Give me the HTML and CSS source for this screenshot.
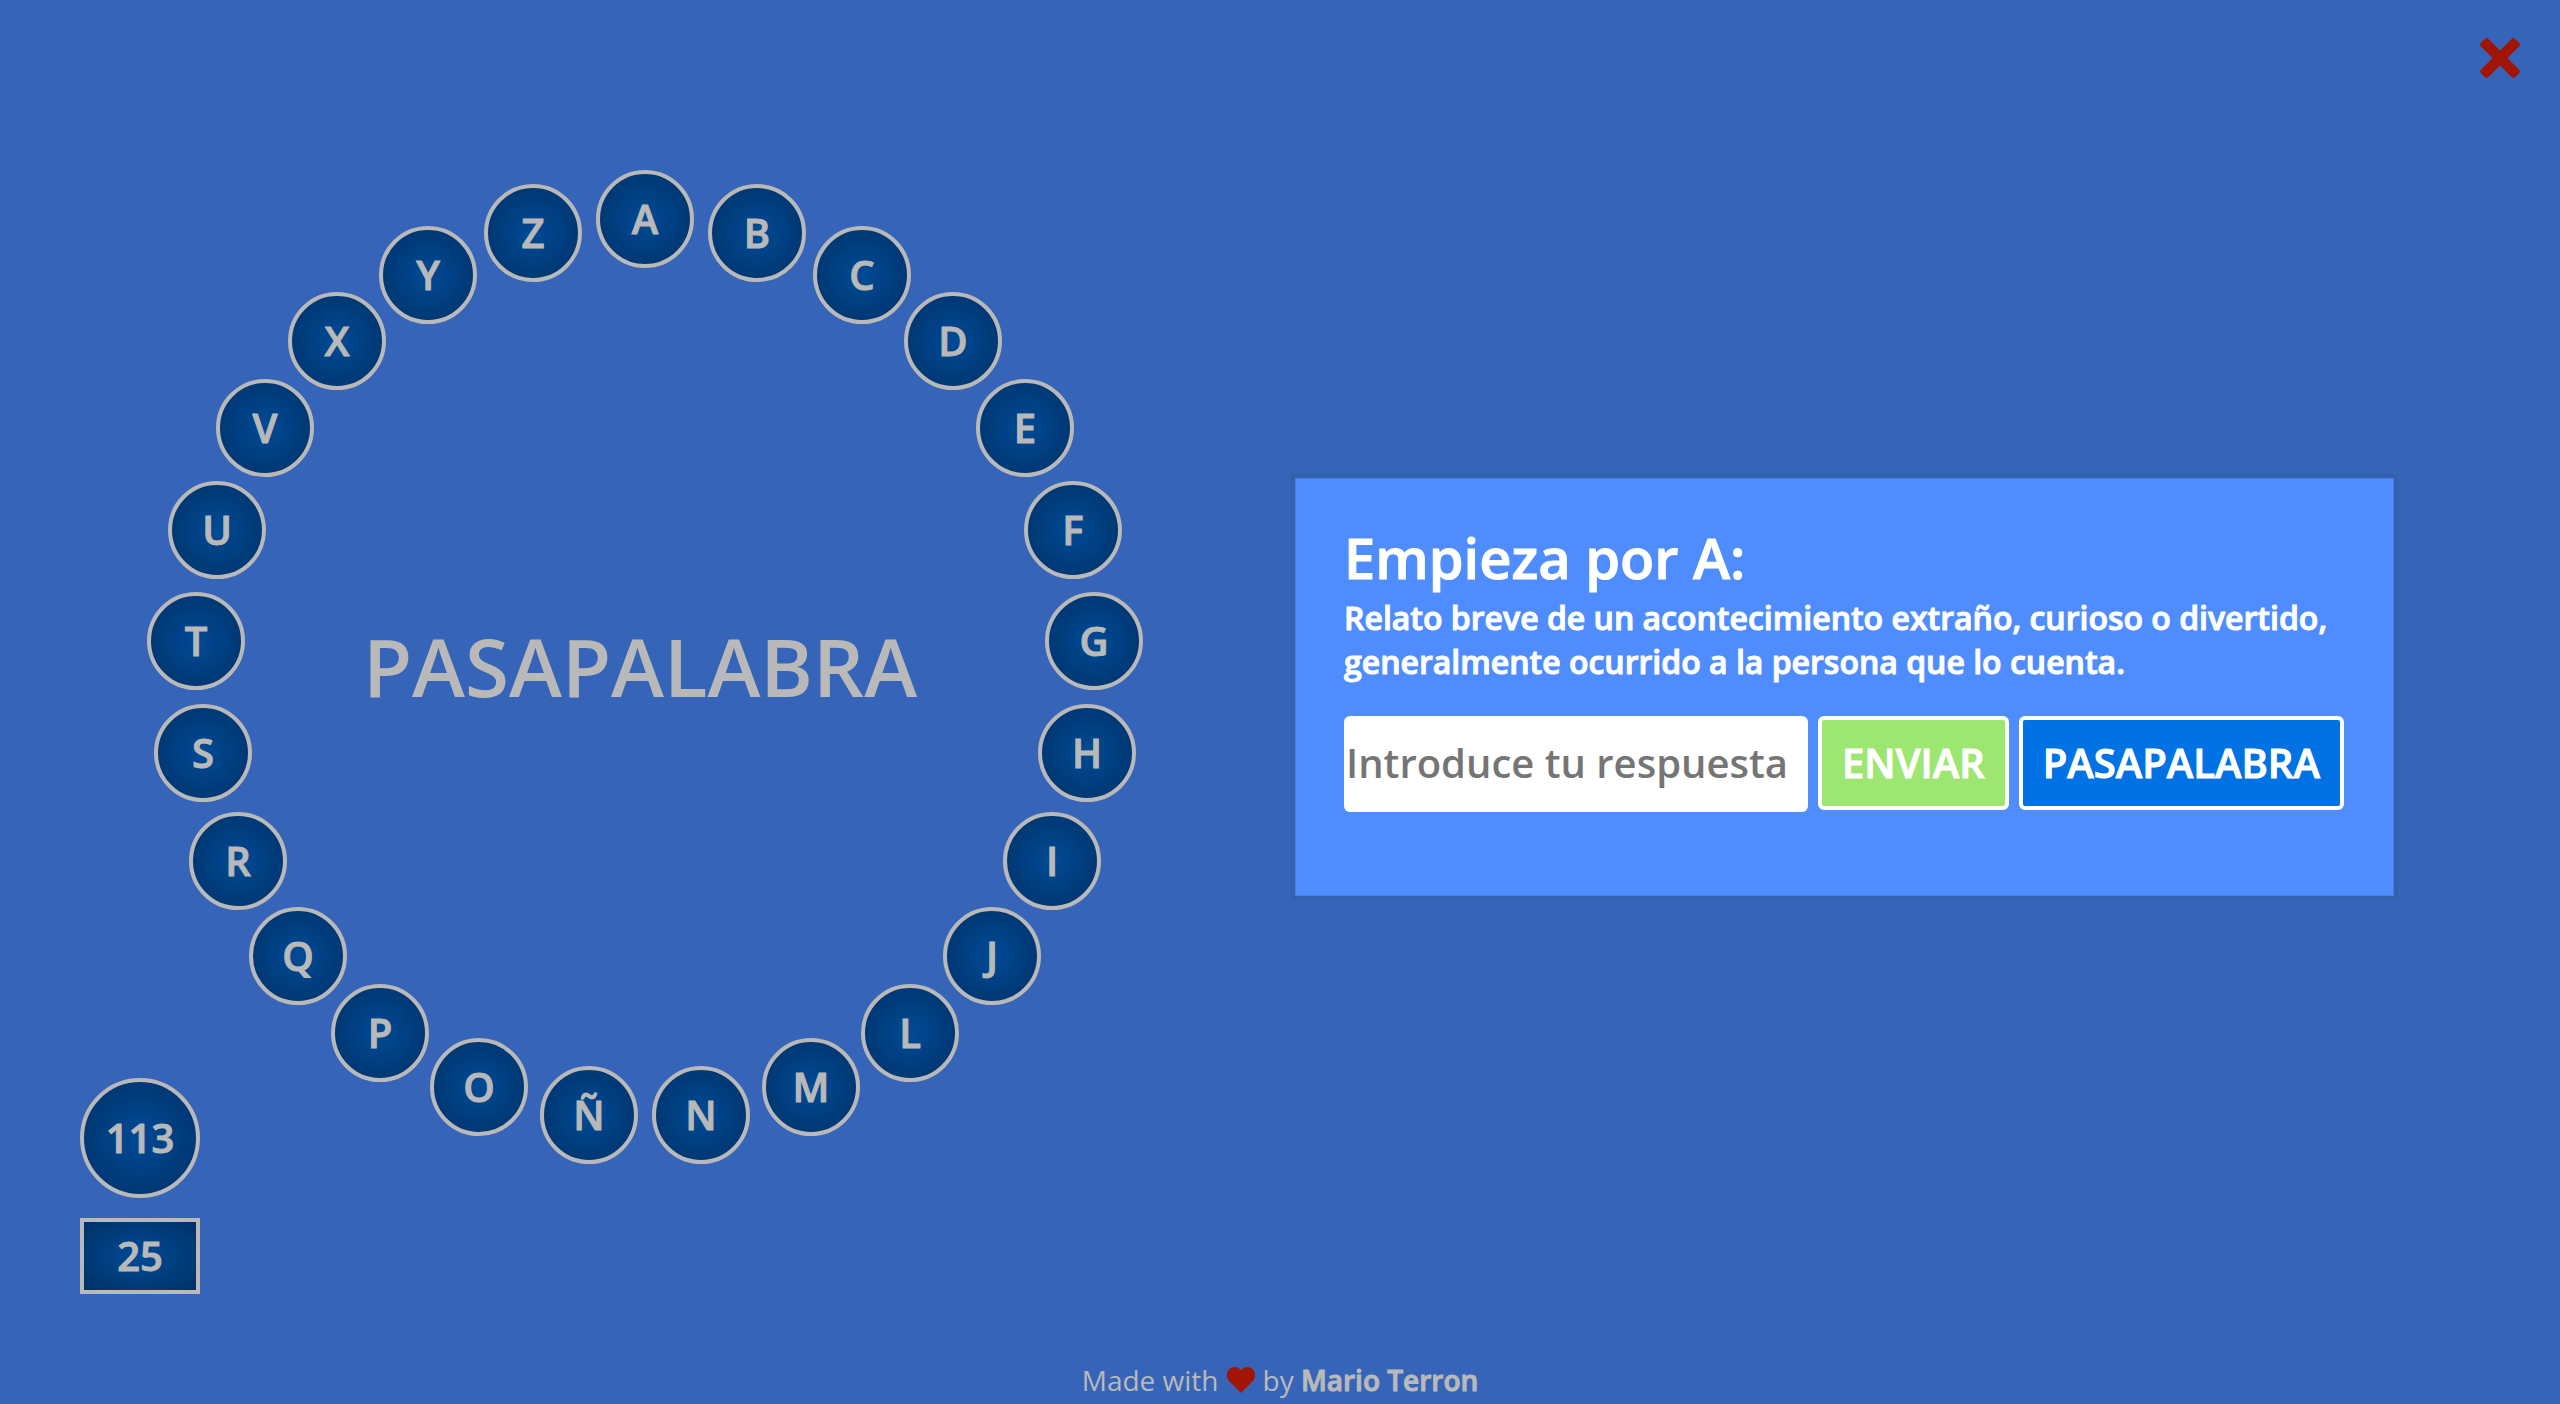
FILE: index.html
```html
<!DOCTYPE html>
<html lang="es">
<head>
<meta charset="utf-8">
<title>Pasapalabra</title>
<link rel="stylesheet" href="styles.css">
</head>
<body>
<header class="topbar">
  <button class="close" type="button" aria-label="Cerrar">
    <svg viewBox="0 0 40 40" width="40" height="40" aria-hidden="true"><path d="M8 0.500Q6.500 -0.600 5 0.700L0.700 5Q-0.400 6.500 0.500 8L12.500 20L0.500 32Q-0.400 33.500 0.700 35L5 39.300Q6.500 40.600 8 39.500L20 27.500L32 39.500Q33.500 40.600 35 39.300L39.300 35Q40.400 33.500 39.500 32L27.500 20L39.500 8Q40.400 6.500 39.300 5L35 0.700Q33.500 -0.600 32 0.500L20 12.500Z"/></svg>
  </button>
</header>
<main class="game">
  <section class="board">
    <h1 class="logo">PASAPALABRA</h1>
    <ol class="ring" id="ring"></ol>
  </section>
  <section class="question">
    <h2 class="question-title">Empieza por A:</h2>
    <p class="question-text">Relato breve de un acontecimiento extraño, curioso o divertido, generalmente ocurrido a la persona que lo cuenta.</p>
    <form class="answer">
      <input class="answer-input" type="text" placeholder="Introduce tu respuesta" aria-label="Introduce tu respuesta">
      <button class="btn btn-send" type="button">ENVIAR</button>
      <button class="btn btn-pass" type="button">PASAPALABRA</button>
    </form>
  </section>
</main>
<aside class="stats">
  <div class="timer">113</div>
  <div class="remaining">25</div>
</aside>
<footer class="footer">
  <span>Made with</span>
  <svg class="heart" viewBox="0 0 28 26" width="28" height="26" role="img" aria-label="love"><path d="M14 26L2.3 14.2C-0.8 11-0.8 5.600 2 2.500C5-0.800 10-0.800 13 2.300L14 3.400L15 2.300C18-0.800 23-0.800 26 2.500C28.800 5.600 28.800 11 25.700 14.200Z"/></svg>
  <span>by <a class="author" href="#">Mario Terron</a></span>
</footer>
<script src="ring.js"></script>
</body>
</html>
```
FILE: styles.css
```css
* {
  box-sizing: border-box;
  margin: 0;
  padding: 0;
}

body {
  min-height: 100vh;
  display: grid;
  grid-template-rows: auto auto auto 1fr;
  background: #3664b8;
  color: #b9b9b9;
  font-family: "Open Sans", sans-serif;
  font-size: 40px;
  font-weight: 600;
}

.topbar {
  display: flex;
  justify-content: flex-end;
  padding: 38px 40px 0;
}

.close {
  display: flex;
  border: 0;
  background: none;
  fill: #a21505;
  cursor: pointer;
}

.game {
  display: grid;
  grid-template-columns: 1fr 1fr;
  padding: 92px 0 0;
}

.board {
  display: grid;
  justify-items: center;
  align-items: center;
}

.board > * {
  grid-area: 1 / 1;
}

.logo {
  padding-bottom: 6px;
  font-size: 80px;
  font-weight: 600;
  line-height: 108px;
}

/* Every letter starts in the centre of the ring and is moved out to its place by ring.js */
.ring {
  width: 998px;
  height: 998px;
  margin-left: 10px;
  position: relative;
  list-style: none;
}

.letter {
  position: absolute;
  inset: calc(50% - 49px) auto auto calc(50% - 49px);
}

.letter,
.timer,
.remaining {
  display: flex;
  align-items: center;
  justify-content: center;
  padding-bottom: 2px;
  border: 4px solid #b9b9b9;
  background: radial-gradient(#004a96, #003166);
}

/* Semi-bold is the heaviest weight in use; a thin stroke makes it bolder */
.letter,
.timer,
.remaining,
.question-title,
.question-text,
.btn,
.author {
  -webkit-text-stroke: 1px currentColor;
}

.letter {
  width: 98px;
  height: 98px;
  border-radius: 50%;
}

.question {
  align-self: center;
  justify-self: start;
  width: 1099px;
  margin: 36px 0 0 15px;
  padding: 42px 46px 83px 48px;
  border: 1px solid #477fe6;
  box-shadow: 0 0 1px 4px #3560ab;
  background: #4f8dff;
  color: #fff;
}

.question-title {
  padding-bottom: 3px;
  font-size: 56px;
  font-weight: 600;
  line-height: 72px;
}

.question-text {
  font-size: 32px;
  line-height: 44px;
}

.answer {
  display: flex;
  align-items: flex-start;
  gap: 10px;
  margin-top: 32px;
}

.answer-input {
  width: 464px;
  height: 96px;
  padding: 0 2px 4px;
  border: 0;
  border-radius: 6px;
  font: inherit;
}

.answer-input::placeholder {
  color: #757575;
}

.btn {
  height: 94px;
  padding: 0 20px 2px;
  border: 4px solid #fff;
  border-radius: 6px;
  color: #fff;
  font: inherit;
}

.btn-send {
  background: #9ce671;
}

.btn-pass {
  background: #0072e3;
}

.stats {
  justify-self: start;
  display: grid;
  gap: 20px;
  margin: -90px 0 0 80px;
}

.timer {
  width: 120px;
  height: 120px;
  border-radius: 50%;
}

.remaining {
  width: 120px;
  height: 76px;
}

.footer {
  display: flex;
  align-self: end;
  align-items: center;
  justify-content: center;
  gap: 8px;
  padding-bottom: 4px;
  font-size: 28px;
  font-weight: 400;
  line-height: 40px;
}

.heart {
  fill: #a21505;
}

.author {
  color: inherit;
  font-weight: 600;
  text-decoration: none;
}
```
FILE: ring.js
```js
const letters = [..."ABCDEFGHIJLMNÑOPQRSTUVXYZ"];
const ring = document.getElementById("ring");
const radius = 450;

letters.forEach((letter, index) => {
  const item = document.createElement("li");
  const angle = (2 * Math.PI * index) / letters.length;
  const x = Math.round(radius * Math.sin(angle));
  const y = Math.round(-radius * Math.cos(angle));
  item.className = "letter";
  item.textContent = letter;
  item.style.translate = `${x}px ${y}px`;
  ring.append(item);
});
```
